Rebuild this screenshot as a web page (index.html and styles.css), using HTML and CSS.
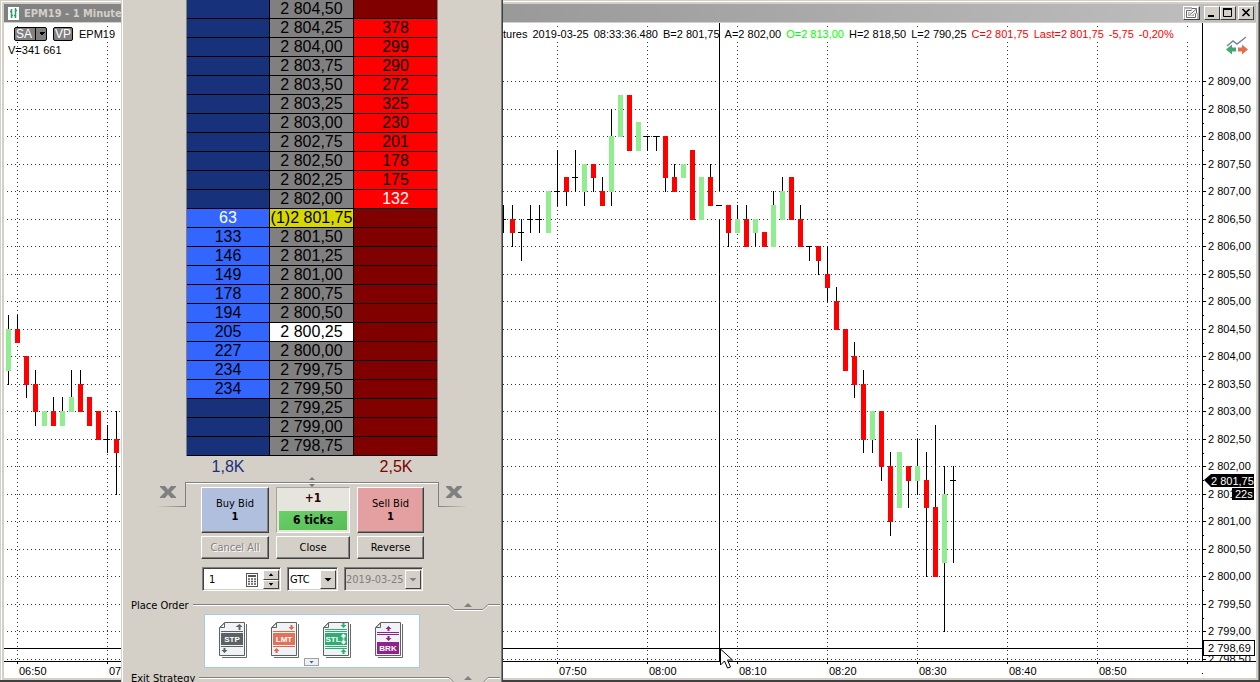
FILE: index.html
```html
<!DOCTYPE html>
<html lang="en">
<head>
    <meta charset="UTF-8">
    <meta name="viewport" content="width=device-width, initial-scale=1.0">
    <title>EPM19 - 1 Minute</title>
    <link rel="stylesheet" href="styles.css">
</head>
<body>

    <main class="window">
        <header class="titlebar">
            <svg class="app-icon" width="11" height="13" viewBox="0 0 11 13">
                <rect width="11" height="13" fill="#fff"/>
                <path d="M3.5 2v9M2 4.5h1M4 8.5h1M7.5 1v10M6 8.5h1M8 3.5h1" stroke="#2a9d68" stroke-width="1.5"/>
            </svg>
            <h1>EPM19 - 1 Minute</h1>
            <div class="window-buttons">
                <button class="win-btn detach" aria-label="Detach">
                    <svg width="15" height="13" viewBox="0 0 15 13" fill="none">
                        <path d="M7 3.5H2.5v7h9V7" stroke="#fff" stroke-width="3"/>
                        <path d="M6 7.5l6-5M8 1.5h4.5V6" stroke="#fff" stroke-width="3"/>
                        <path d="M7 3.5H2.5v7h9V7M6 7.5l6-5M8 1.5h4.5V6" stroke="#666"/>
                    </svg>
                </button>
                <button class="win-btn" aria-label="Minimize">
                    <svg width="12" height="10" viewBox="0 0 12 10"><path d="M2 8h6" stroke="#000" stroke-width="2"/></svg>
                </button>
                <button class="win-btn" aria-label="Maximize">
                    <svg width="12" height="10" viewBox="0 0 12 10"><path d="M1.5 1v7.5h8V1M1 1h9" stroke="#000" fill="none"/><path d="M1 1h9" stroke="#000" stroke-width="2"/></svg>
                </button>
                <button class="win-btn close" aria-label="Close window">
                    <svg width="12" height="10" viewBox="0 0 12 10"><path d="M2.5 1l7 7M9.5 1l-7 7" stroke="#000" stroke-width="1.7"/></svg>
                </button>
            </div>
        </header>

        <section class="chart-area">
            <svg id="chart" class="chart"></svg>

            <div class="quote-bar">
                <div class="symbol">
                    <button class="tag">SA<i class="tag-arrow"></i></button>
                    <button class="tag">VP</button>
                    <span>EPM19</span>
                    <span class="symbol-box"></span>
                </div>
                <div class="quotes">
                    <span>tures</span>
                    <span>2019-03-25</span>
                    <span>08:33:36.480</span>
                    <span>B=2 801,75</span>
                    <span>A=2 802,00</span>
                    <span class="open">O=2 813,00</span>
                    <span>H=2 818,50</span>
                    <span>L=2 790,25</span>
                    <span class="down">C=2 801,75</span>
                    <span class="down">Last=2 801,75</span>
                    <span class="down">-5,75</span>
                    <span class="down">-0,20%</span>
                </div>
            </div>
            <div class="volume">V=341 661</div>

            <svg class="trade-icon" width="22" height="20" viewBox="0 0 22 20">
                <path d="M1 10l6-5 4 3 9-7" fill="none" stroke="#76839f" stroke-width="1.5"/>
                <path d="M0 13.5l6-5v3h4v4H6v3z" fill="#42a871"/>
                <path d="M22 13.5l-6-5v3h-4v4h4v3z" fill="#e2704f"/>
            </svg>
        </section>
    </main>

    <aside class="panel">
        <table class="ladder">
            <tbody>
                <tr><td></td><td>2 804,50</td><td></td></tr>
                <tr><td></td><td>2 804,25</td><td class="ask">378</td></tr>
                <tr><td></td><td>2 804,00</td><td class="ask">299</td></tr>
                <tr><td></td><td>2 803,75</td><td class="ask">290</td></tr>
                <tr><td></td><td>2 803,50</td><td class="ask">272</td></tr>
                <tr><td></td><td>2 803,25</td><td class="ask">325</td></tr>
                <tr><td></td><td>2 803,00</td><td class="ask">230</td></tr>
                <tr><td></td><td>2 802,75</td><td class="ask">201</td></tr>
                <tr><td></td><td>2 802,50</td><td class="ask">178</td></tr>
                <tr><td></td><td>2 802,25</td><td class="ask">175</td></tr>
                <tr><td></td><td>2 802,00</td><td class="ask best">132</td></tr>
                <tr><td class="bid best">63</td><td class="last">(1)2 801,75</td><td></td></tr>
                <tr><td class="bid">133</td><td>2 801,50</td><td></td></tr>
                <tr><td class="bid">146</td><td>2 801,25</td><td></td></tr>
                <tr><td class="bid">149</td><td>2 801,00</td><td></td></tr>
                <tr><td class="bid">178</td><td>2 800,75</td><td></td></tr>
                <tr><td class="bid">194</td><td>2 800,50</td><td></td></tr>
                <tr><td class="bid">205</td><td class="entry">2 800,25</td><td></td></tr>
                <tr><td class="bid">227</td><td>2 800,00</td><td></td></tr>
                <tr><td class="bid">234</td><td>2 799,75</td><td></td></tr>
                <tr><td class="bid">234</td><td>2 799,50</td><td></td></tr>
                <tr><td></td><td>2 799,25</td><td></td></tr>
                <tr><td></td><td>2 799,00</td><td></td></tr>
                <tr><td></td><td>2 798,75</td><td></td></tr>
            </tbody>
        </table>
        <div class="totals">
            <span class="total-bid">1,8K</span>
            <span class="total-ask">2,5K</span>
        </div>

        <section class="controls">
            <button class="wing left" aria-label="Cancel buy orders">
                <svg width="16" height="12" viewBox="0 0 16 12"><path d="M0 0h5l3 3.500 3-3.500h5v1l-5 5 5 5v1h-5l-3-3.500-3 3.500H0v-1l5-5-5-5z" fill="#808080"/></svg>
            </button>
            <div class="control-body">
                <svg class="splitter" width="6" height="10" viewBox="0 0 6 10"><path d="M3 0l3 3H0zM3 10l3-3H0z" fill="#777"/></svg>
                <div class="order-grid">
                    <button class="btn buy">Buy Bid<b>1</b></button>
                    <div class="position"><b>+1</b><strong>6 ticks</strong></div>
                    <button class="btn sell">Sell Bid<b>1</b></button>
                    <button class="btn" disabled>Cancel All</button>
                    <button class="btn">Close</button>
                    <button class="btn">Reverse</button>
                </div>
                <div class="order-fields">
                    <div class="field quantity">
                        <input type="text" value="1" aria-label="Quantity">
                        <svg width="12" height="14" viewBox="0 0 12 14">
                            <rect x="0.5" y="0.5" width="11" height="13" fill="#fff" stroke="#555"/>
                            <path d="M2 3h8" stroke="#555" stroke-width="2"/>
                            <path d="M2 6h8M2 8.5h8M2 11h8" stroke="#555" stroke-width="1.5" stroke-dasharray="2 1"/>
                        </svg>
                        <div class="spin">
                            <button aria-label="Increase"><i class="arrow up"></i></button>
                            <button aria-label="Decrease"><i class="arrow"></i></button>
                        </div>
                    </div>
                    <div class="field tif">
                        <select aria-label="Time in force"><option>GTC</option></select>
                        <span class="drop"><i class="arrow big"></i></span>
                    </div>
                    <div class="field date">
                        <select aria-label="Expiry date" disabled><option>2019-03-25</option></select>
                        <span class="drop"><i class="arrow big"></i></span>
                    </div>
                </div>
            </div>
            <button class="wing right" aria-label="Cancel sell orders">
                <svg width="16" height="12" viewBox="0 0 16 12"><path d="M0 0h5l3 3.500 3-3.500h5v1l-5 5 5 5v1h-5l-3-3.500-3 3.500H0v-1l5-5-5-5z" fill="#808080"/></svg>
            </button>
        </section>

        <div class="section-head">
            <h2>Place Order</h2>
            <span class="rule"></span>
            <svg width="52" height="12" viewBox="0 0 52 12" fill="none">
                <path d="M0 5.5h1l5 5h29l5-5h12" stroke="#fff" transform="translate(0 1)"/>
                <path d="M0 5.5h1l5 5h29l5-5h12" stroke="#808080"/>
                <path d="M20 4l4 4h-8z" fill="#808080"/>
            </svg>
        </div>

        <div class="order-types">
            <button aria-label="Stop order">
                <svg width="28" height="36" viewBox="0 0 28 36">
                    <path d="M27.5 2v33.5H3" fill="none" stroke="#666b6e"/>
                    <path d="M5.5 0.5h20v33H0.5v-28z" fill="#f0f2f6" stroke="#5c6164"/>
                    <path d="M5.5 1v4.500H1z" fill="#fff" stroke="#5c6164"/>
                    <path d="M2 9.5h22M2 24.5h22" stroke="#5c6164"/>
                    <rect x="2" y="11" width="22" height="12" fill="#5c6164"/>
                    <path d="M20.5 2l3 3h-2v3h-2V5h-3zM5.5 31l3-3h-2v-2h-2v2h-2z" fill="#5c6164"/>
                    <text x="13" y="20" class="icon-text">STP</text>
                </svg>
            </button>
            <button aria-label="Limit order">
                <svg width="28" height="36" viewBox="0 0 28 36">
                    <path d="M27.5 2v33.5H3" fill="none" stroke="#666b6e"/>
                    <path d="M5.5 0.5h20v33H0.5v-28z" fill="#f0f2f6" stroke="#5c6164"/>
                    <path d="M5.5 1v4.500H1z" fill="#fff" stroke="#5c6164"/>
                    <path d="M2 9.5h22M2 24.5h22" stroke="#e0674a"/>
                    <rect x="2" y="11" width="22" height="12" fill="#e27358"/>
                    <path d="M20.5 8l3-3h-2V3h-2v2h-2zM5.5 26l3 3h-2v2h-2v-2h-2z" fill="#e0674a"/>
                    <text x="13" y="20" class="icon-text">LMT</text>
                </svg>
            </button>
            <button aria-label="Stop limit order">
                <svg width="28" height="36" viewBox="0 0 28 36">
                    <path d="M27.5 2v33.5H3" fill="none" stroke="#666b6e"/>
                    <path d="M5.5 0.5h20v33H0.5v-28z" fill="#f0f2f6" stroke="#5c6164"/>
                    <path d="M5.5 1v4.500H1z" fill="#fff" stroke="#5c6164"/>
                    <path d="M2 7.5h22M2 9.5h22M2 24.5h22M2 26.5h22" stroke="#2fae74"/>
                    <rect x="2" y="11" width="22" height="12" fill="#2fae74"/>
                    <path d="M20.5 6l3-3h-2V1h-2v2h-2zM20.5 27l3 3h-2v2h-2v-2h-2z" fill="#2fae74"/>
                    <path d="M20.5 11.5l3 3h-2v2h-2v-2h-2zM20.5 22.5l3-3h-2v-2h-2v2h-2z" fill="#fff"/>
                    <text x="10" y="20" class="icon-text">STL</text>
                </svg>
            </button>
            <button aria-label="Bracket order">
                <svg width="28" height="36" viewBox="0 0 28 36">
                    <path d="M27.5 2v33.5H3" fill="none" stroke="#666b6e"/>
                    <path d="M5.5 0.5h20v33H0.5v-28z" fill="#f0f2f6" stroke="#5c6164"/>
                    <path d="M5.5 1v4.500H1z" fill="#fff" stroke="#5c6164"/>
                    <path d="M2 10.5h22M2 12.5h22" stroke="#8e2488"/>
                    <rect x="2" y="20" width="22" height="12" fill="#8e2488"/>
                    <path d="M13.5 4l3 3h-2v2h-2V7h-2zM13.5 19l3-3h-2v-2h-2v2h-2z" fill="#8e2488"/>
                    <text x="13" y="29" class="icon-text">BRK</text>
                </svg>
            </button>
            <button class="more" aria-label="More order types"><i class="arrow"></i></button>
        </div>

        <div class="section-head next">
            <h2>Exit Strategy</h2>
            <span class="rule"></span>
            <svg width="52" height="12" viewBox="0 0 52 12" fill="none">
                <path d="M0 5.5h1l5 5h29l5-5h12" stroke="#fff" transform="translate(0 1)"/>
                <path d="M0 5.5h1l5 5h29l5-5h12" stroke="#808080"/>
                <path d="M20 4l4 4h-8z" fill="#808080"/>
            </svg>
        </div>
    </aside>

    <script src="chart.js"></script>
</body>
</html>
```
FILE: styles.css
```css
* {
    box-sizing: border-box;
}

body {
    margin: 0;
    height: 100vh;
    overflow: hidden;
    position: relative;
    background-color: #d4d0c8;
    font-family: "DejaVu Sans Condensed", "DejaVu Sans", sans-serif;
    font-size: 11px;
    color: #000;
}

h1, h2 {
    margin: 0;
    font-size: 11px;
}

button, input, select {
    font: inherit;
    color: inherit;
    padding: 0;
    margin: 0;
    border: none;
    border-radius: 0;
    background: none;
}

/* chart window */

.window {
    height: 100%;
    display: flex;
    flex-direction: column;
    padding: 2px;
    border-right: 1px solid #404040;
    border-bottom: 2px solid #404040;
    box-shadow: inset 1px 1px #d4d0c8, inset 2px 2px #fff, inset -1px 0 #808080;
}

.titlebar {
    display: flex;
    align-items: center;
    height: 19px;
    margin: 2px 1px 0 2px;
    padding: 0 2px 0 4px;
    gap: 5px;
    background: linear-gradient(to right, #808080, #c0c0c0);
    border-bottom: 1px solid #d4d0c8;
}

.titlebar h1 {
    flex: 1;
    color: #d4d0c8;
    white-space: nowrap;
}

.window-buttons {
    display: flex;
}

.win-btn {
    width: 16px;
    height: 14px;
    display: flex;
    align-items: center;
    justify-content: center;
    background-color: #d4d0c8;
    border: 1px solid;
    border-color: #fff #404040 #404040 #fff;
}

.win-btn.detach {
    width: 17px;
    margin-right: 4px;
    background-color: #b4b4b4;
}

.win-btn.detach svg {
    flex-shrink: 0;
}

.win-btn.close {
    margin-left: 2px;
}

.chart-area {
    flex: 1;
    min-height: 0;
    position: relative;
    margin: 0 1px 0 2px;
    background-color: #fff;
    font-family: "Liberation Sans", Arial, sans-serif;
}

.chart {
    display: block;
    width: 100%;
    height: 100%;
    font-size: 11px;
}

.quote-bar {
    position: absolute;
    top: 4px;
    left: 0;
    right: 0;
    display: flex;
    align-items: center;
    height: 14px;
    white-space: nowrap;
}

.symbol {
    width: 499px;
    flex-shrink: 0;
    display: flex;
    align-items: center;
    gap: 6px;
    padding-left: 10px;
}

.tag {
    display: flex;
    align-items: center;
    height: 14px;
    padding: 0 1px;
    color: #fff;
    font-size: 12px;
    line-height: 12px;
    background-color: #808080;
    border: 1px solid #000;
    border-radius: 2px;
}

.tag-arrow {
    width: 12px;
    height: 12px;
    margin: 0 -2px 0 3px;
    border-left: 1px solid #000;
    background: conic-gradient(from -45deg at 50% 75%, #000 90deg, transparent 0) center / 6px 4px no-repeat;
}

.symbol-box {
    width: 60px;
    height: 14px;
    border: 1px solid #000;
    border-radius: 2px;
    background-color: #fff;
}

.quotes {
    display: flex;
    gap: 5px;
}

.open {
    color: #00ff00;
}

.down {
    color: #ff0000;
}

.volume {
    position: absolute;
    top: 21px;
    left: 4px;
}

.trade-icon {
    position: absolute;
    top: 13px;
    right: 8px;
}

/* order entry panel, floats over the chart */

.panel {
    position: absolute;
    top: 0;
    left: 121px;
    width: 382px;
    height: 100%;
    overflow: hidden;
    display: flex;
    flex-direction: column;
    background-color: #d4d0c8;
    border: solid;
    border-width: 0 1px 0 1px;
    border-color: #404040 #404040 #404040 #d4d0c8;
    box-shadow: inset 1px 0 #fff, inset -1px 0 #808080;
}

.ladder {
    width: 252px;
    flex-shrink: 0;
    align-self: center;
    table-layout: fixed;
    border-spacing: 0;
    border-left: 1px solid #808080;
    border-right: 1px solid #808080;
    font-family: "Liberation Sans", Arial, sans-serif;
    font-size: 16px;
    line-height: 18px;
}

.ladder td {
    height: 19px;
    padding: 0;
    text-align: center;
    white-space: nowrap;
    border-bottom: 1px solid #000;
    background-color: #808080;
}

.ladder td:first-child {
    width: 82px;
    background-color: #18317b;
}

.ladder td:nth-child(2) {
    width: 85px;
    border-left: 1px solid #000;
    border-right: 1px solid #000;
}

.ladder td:last-child {
    background-color: #800000;
}

.ladder td.bid {
    background-color: #3366ff;
}

.ladder td.ask {
    background-color: #ff0000;
}

.ladder td.best {
    color: #fff;
}

.ladder td.last {
    background-color: #d8d800;
}

.ladder td.entry {
    background-color: #fff;
}

.totals {
    align-self: center;
    flex-shrink: 0;
    width: 252px;
    height: 26px;
    display: flex;
    justify-content: space-between;
    font-family: "Liberation Sans", Arial, sans-serif;
    font-size: 16px;
    line-height: 22px;
    text-align: center;
}

.totals span {
    width: 84px;
}

.total-bid {
    color: #18317b;
}

.total-ask {
    color: #800000;
}

.controls {
    flex-shrink: 0;
    display: flex;
    justify-content: center;
    align-items: flex-start;
}

.wing {
    position: relative;
    width: 30px;
    height: 25px;
    padding-top: 4px;
    display: flex;
    justify-content: center;
}

.wing::after {
    content: "";
    position: absolute;
    left: 0;
    right: 0;
    bottom: 0;
    height: 1px;
}

.wing.left {
    border-right: 1px solid #808080;
    padding-right: 6px;
}

.wing.left::after {
    background: linear-gradient(to left, #808080, #d4d0c8);
}

.wing.right {
    border-left: 1px solid #808080;
}

.wing.right::after {
    background: linear-gradient(to right, #808080, #d4d0c8);
}

.control-body {
    position: relative;
    width: 252px;
    padding: 4px 0 0 15px;
    border-top: 1px solid #808080;
    box-shadow: inset 0 1px #fff;
}

.splitter {
    position: absolute;
    top: -6px;
    left: 123px;
}

.order-grid {
    display: grid;
    grid-template-columns: 68px 74px 67px;
    grid-template-rows: 46px 23px;
    gap: 3px 7px;
}

.btn {
    display: flex;
    flex-direction: column;
    align-items: center;
    justify-content: center;
    line-height: 13px;
    background-color: #d4d0c8;
    border: 1px solid;
    border-color: #fff #404040 #404040 #fff;
    box-shadow: inset -1px -1px #808080;
}

.btn.buy {
    background-color: #b0bfde;
}

.btn.sell {
    background-color: #e4a0a0;
}

.btn:disabled {
    color: #808080;
    text-shadow: 1px 1px #fff;
}

.position {
    display: flex;
    flex-direction: column;
    justify-content: space-between;
    align-items: stretch;
    padding: 3px 2px 2px;
    text-align: center;
    color: #300;
    font-size: 12px;
    background-color: #e6e5dd;
    border: 1px solid;
    border-color: #a8a49c #fff #fff #a8a49c;
}

.position strong {
    height: 19px;
    line-height: 19px;
    color: #000;
    background: linear-gradient(to bottom right, #6ccf69, #56bd54);
}

.order-fields {
    display: flex;
    gap: 6px;
    margin: 8px 0 0 1px;
}

.field {
    position: relative;
    display: flex;
    align-items: center;
    height: 24px;
    background-color: #fff;
    border: 1px solid;
    border-color: #808080 #fff #fff #808080;
    box-shadow: inset 1px 1px #404040, inset -1px -1px #d4d0c8;
}

.quantity {
    width: 79px;
    padding: 2px 1px 1px 2px;
}

.quantity input {
    flex: 1;
    min-width: 0;
    padding-left: 4px;
}

.spin {
    width: 16px;
    height: 100%;
    margin-left: 5px;
    display: flex;
    flex-direction: column;
}

.spin button {
    flex: 1;
    display: flex;
    align-items: center;
    justify-content: center;
    background-color: #d4d0c8;
    border: 1px solid;
    border-color: #fff #404040 #404040 #fff;
}

.arrow {
    width: 5px;
    height: 3px;
    background-color: #000;
    clip-path: polygon(0 0, 100% 0, 50% 100%);
}

.arrow.up {
    clip-path: polygon(50% 0, 100% 100%, 0 100%);
}

.arrow.big {
    width: 8px;
    height: 4px;
}

.tif {
    width: 51px;
}

.date {
    width: 79px;
    color: #808080;
    background-color: #d4d0c8;
}

.field select {
    width: 100%;
    height: 100%;
    padding-left: 2px;
    appearance: none;
    opacity: 1;
}

.date select {
    padding-left: 1px;
}

.drop {
    position: absolute;
    top: 2px;
    right: 1px;
    bottom: 1px;
    width: 16px;
    display: flex;
    align-items: center;
    justify-content: center;
    background-color: #d4d0c8;
    border: 1px solid;
    border-color: #fff #404040 #404040 #fff;
    pointer-events: none;
}

.date .arrow {
    background-color: #808080;
}

.section-head {
    flex-shrink: 0;
    display: flex;
    align-items: center;
    height: 16px;
    margin-top: 6px;
    padding: 0 2px 0 9px;
}

.section-head.next {
    margin-top: 2px;
}

.section-head h2 {
    font-weight: normal;
    margin-right: 4px;
}

.rule {
    flex: 1;
    height: 2px;
    background-color: #808080;
    border-bottom: 1px solid #fff;
}

.order-types {
    position: relative;
    flex-shrink: 0;
    align-self: center;
    display: flex;
    gap: 24px;
    width: 216px;
    height: 54px;
    margin-top: 1px;
    padding: 7px 0 0 14px;
    background-color: #fff;
    border: 1px solid #a5c8ee;
}

.order-types button {
    width: 28px;
    height: 36px;
}

.order-types svg {
    display: block;
}

.icon-text {
    font-family: "Liberation Sans", Arial, sans-serif;
    font-size: 8px;
    font-weight: bold;
    fill: #fff;
    text-anchor: middle;
}

.order-types .more {
    position: absolute;
    left: 99px;
    bottom: 1px;
    width: 15px;
    height: 8px;
    display: flex;
    align-items: center;
    justify-content: center;
    background-color: #f0f0f0;
    border: 1px solid #a0a0a0;
}

.more .arrow {
    background-color: #4060c0;
}
```
FILE: chart.js
```javascript
// one candle per minute: time, open, high, low, close
const candles = [
    ['06:49', 2803.75, 2804.75, 2803.5, 2804.5],
    ['06:50', 2804.5, 2804.75, 2804.25, 2804.25],
    ['06:51', 2804, 2804, 2803.25, 2803.5],
    ['06:52', 2803.5, 2803.75, 2802.75, 2803],
    ['06:53', 2802.75, 2803, 2802.75, 2803],
    ['06:54', 2803, 2803.25, 2802.75, 2802.75],
    ['06:55', 2802.75, 2803.25, 2802.75, 2803],
    ['06:56', 2803, 2803.75, 2803, 2803.25],
    ['06:57', 2803.5, 2803.75, 2803, 2803],
    ['06:58', 2803.25, 2803.25, 2802.75, 2802.75],
    ['06:59', 2803, 2803, 2802.5, 2802.5],
    ['07:00', 2802.5, 2802.75, 2802.25, 2802.5],
    ['07:01', 2802.5, 2803, 2801.5, 2802.25],
    ['07:44', 2806.5, 2806.75, 2806.25, 2806.5],
    ['07:45', 2806.5, 2806.75, 2806, 2806.25],
    ['07:46', 2806.25, 2806.5, 2805.75, 2806.25],
    ['07:47', 2806.5, 2806.75, 2806.25, 2806.5],
    ['07:48', 2806.5, 2806.75, 2806.25, 2806.5],
    ['07:49', 2806.25, 2807, 2806.25, 2807],
    ['07:50', 2807, 2807.75, 2806.75, 2807],
    ['07:51', 2807.25, 2807.25, 2806.75, 2807],
    ['07:52', 2807.25, 2807.75, 2807, 2807.25],
    ['07:53', 2807, 2807.5, 2806.75, 2807.5],
    ['07:54', 2807.5, 2807.5, 2807, 2807.25],
    ['07:55', 2807, 2807.25, 2806.75, 2806.75],
    ['07:56', 2807, 2808.5, 2806.75, 2808],
    ['07:57', 2808, 2808.75, 2808, 2808.75],
    ['07:58', 2808.75, 2808.75, 2807.75, 2807.75],
    ['07:59', 2807.75, 2808.25, 2807.75, 2808.25],
    ['08:00', 2808, 2808, 2807.75, 2808],
    ['08:01', 2808, 2808, 2807.75, 2808],
    ['08:02', 2808, 2808, 2807, 2807.25],
    ['08:03', 2807.25, 2807.5, 2807, 2807],
    ['08:04', 2807.25, 2807.5, 2807.25, 2807.5],
    ['08:05', 2807.75, 2807.75, 2806.5, 2806.5],
    ['08:06', 2806.5, 2807.25, 2806.5, 2807.25],
    ['08:07', 2807.25, 2807.5, 2806.75, 2806.75],
    ['08:08', 2806.75, 2806.75, 2806.75, 2806.75],
    ['08:09', 2806.75, 2806.75, 2806, 2806.25],
    ['08:10', 2806.25, 2806.75, 2806.25, 2806.5],
    ['08:11', 2806.5, 2806.75, 2806, 2806],
    ['08:12', 2806.25, 2806.5, 2806, 2806.5],
    ['08:13', 2806.25, 2806.25, 2806, 2806],
    ['08:14', 2806, 2807, 2806, 2806.75],
    ['08:15', 2806.5, 2807.25, 2806.5, 2807],
    ['08:16', 2807.25, 2807.25, 2806.5, 2806.5],
    ['08:17', 2806.5, 2806.75, 2806, 2806],
    ['08:18', 2806, 2806, 2805.75, 2806],
    ['08:19', 2806, 2806, 2805.5, 2805.75],
    ['08:20', 2805.5, 2806, 2805, 2805.25],
    ['08:21', 2805, 2805.25, 2804.5, 2804.5],
    ['08:22', 2804.5, 2804.5, 2803.75, 2803.75],
    ['08:23', 2804, 2804.25, 2803.25, 2803.5],
    ['08:24', 2803.5, 2803.75, 2802.25, 2802.5],
    ['08:25', 2802.5, 2803, 2802.25, 2803],
    ['08:26', 2803, 2803, 2801.75, 2802],
    ['08:27', 2802, 2802.25, 2800.75, 2801],
    ['08:28', 2801.25, 2802.25, 2801.25, 2802.25],
    ['08:29', 2802, 2802, 2801.25, 2801.75],
    ['08:30', 2801.75, 2802.5, 2801.5, 2802],
    ['08:31', 2801.75, 2802.25, 2800, 2801.25],
    ['08:32', 2801.25, 2802.75, 2800, 2800],
    ['08:33', 2800.25, 2802, 2799, 2801.5],
    ['08:34', 2801.75, 2802, 2800.25, 2801.75]
];

const svg = document.getElementById('chart');

function minutes(time) {
    const [h, m] = time.split(':').map(Number);
    return h * 60 + m;
}

function xOf(time) {
    return 13 + (minutes(time) - minutes('06:50')) * 9;
}

function yOf(price) {
    return Math.round(58 + (2809 - price) * 55);
}

function label(price) {
    return '2 ' + (price - 2000).toFixed(2).replace('.', ',');
}

function add(tag, attrs, text) {
    const el = document.createElementNS('http://www.w3.org/2000/svg', tag);
    for (const name in attrs) el.setAttribute(name, attrs[name]);
    if (text) el.textContent = text;
    svg.appendChild(el);
}

function rect(x, y, width, height, fill) {
    add('rect', { x: x, y: y, width: width, height: height, fill: fill });
}

function dotted(d) {
    add('path', { d: d, stroke: '#333', 'stroke-dasharray': '1 3' });
}

function draw() {
    svg.innerHTML = '';
    const axisX = svg.clientWidth - 54;
    const axisY = svg.clientHeight - 17;
    const crossX = xOf('08:08');
    const crossY = axisY - 13;

    // grid and price labels
    for (let p = 2809; p >= 2798.5; p -= 0.5) {
        const y = yOf(p);
        dotted(`M3 ${y + 0.5}H${axisX}`);
        rect(axisX, y, 4, 1, '#000');
        rect(axisX, y + 14, 2, 1, '#000');
        add('text', { x: axisX + 6, y: y + 4 }, label(p));
    }
    rect(axisX + 1, axisY + 1, 60, 17, '#fff');
    for (let m = minutes('06:50'); m <= minutes('09:00'); m += 10) {
        const time = String(Math.floor(m / 60)).padStart(2, '0') + ':' + String(m % 60).padStart(2, '0');
        const x = xOf(time);
        // the order panel hides these
        if (x > 117 && x < 499) continue;
        // leave the quote line clear
        dotted(`M${x + 0.5} 3v1M${x + 0.5} 19V${axisY}`);
        rect(x, axisY, 1, 3, '#000');
        if (m < minutes('09:00')) add('text', { x: x + 2, y: axisY + 14 }, time);
    }

    // crosshair, broken at the candle under it
    rect(crossX, 0, 1, yOf(2807), '#000');
    rect(crossX, yOf(2806.5), 1, axisY - yOf(2806.5), '#000');
    rect(0, crossY, axisX, 1, '#000');

    for (const [time, open, high, low, close] of candles) {
        const x = xOf(time);
        rect(x, yOf(high), 1, yOf(low) - yOf(high) + 1, '#000');
        if (open === close) {
            rect(x - 3, yOf(open), 6, 1, '#000');
        } else {
            const top = yOf(Math.max(open, close));
            const bottom = yOf(Math.min(open, close));
            rect(x - 2, top, 5, bottom - top + 1, close > open ? '#90ee90' : '#ff0000');
        }
    }

    // axes
    rect(axisX, 0, 1, axisY, '#000');
    rect(0, axisY, svg.clientWidth, 1, '#000');

    // last price, bar countdown and crosshair price
    const lastY = yOf(2801.75);
    add('path', { d: `M${axisX + 2} ${lastY}l7 -6h43v13h-43z`, fill: '#000' });
    add('text', { x: axisX + 9, y: lastY + 5, fill: '#fff' }, '2 801,75');
    rect(axisX + 30, lastY + 8, 22, 12, '#000');
    add('text', { x: axisX + 33, y: lastY + 18, fill: '#fff' }, '22s');
    add('rect', { x: axisX + 1.5, y: crossY - 7.5, width: 51, height: 15, fill: '#fff', stroke: '#000' });
    add('text', { x: axisX + 6, y: crossY + 4 }, '2 798,69');

    // mouse pointer
    add('path', {
        d: `M${crossX + 1.5} ${crossY + 1}v16l4 -4l3 7l3 -1l-3 -7h5z`,
        fill: '#fff',
        stroke: '#000'
    });
}

draw();
window.addEventListener('resize', draw);
```
